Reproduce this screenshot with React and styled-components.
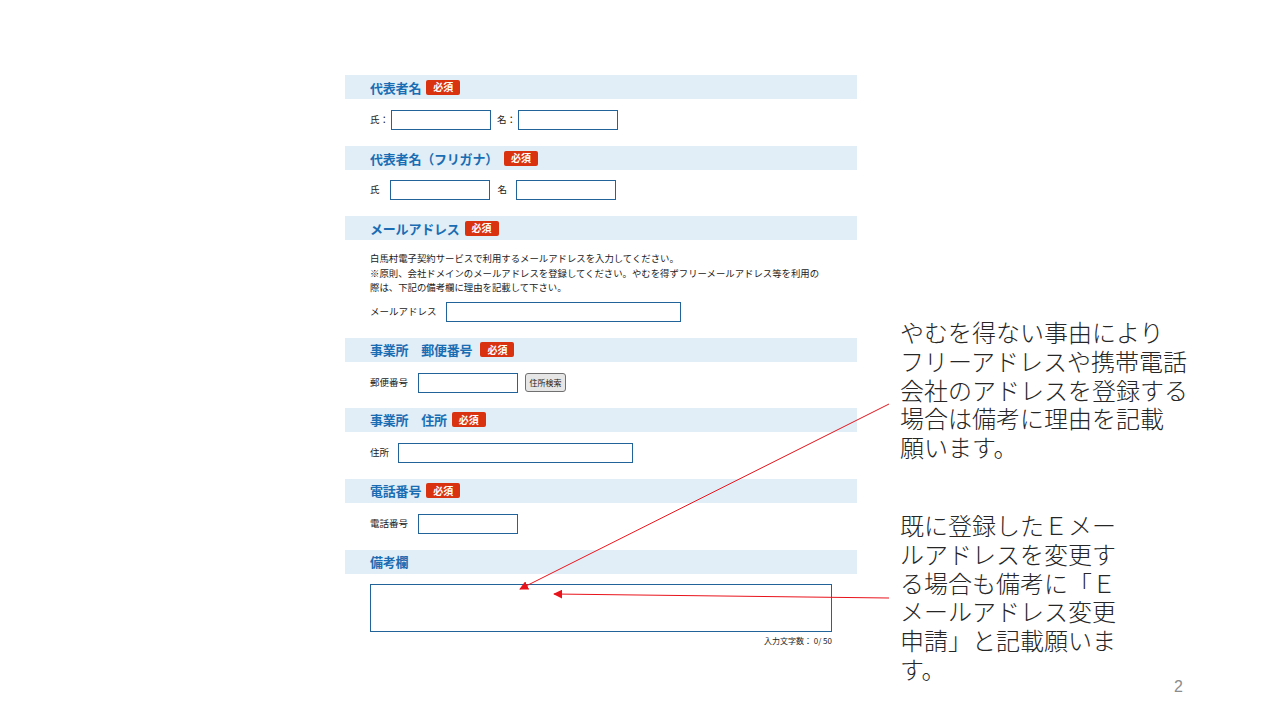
import React from 'react';
import styled, { createGlobalStyle } from 'styled-components';

const GlobalStyle = createGlobalStyle`
  html, body {
    margin: 0;
    padding: 0;
    background: #ffffff;
  }
  body {
    font-family: "Noto Sans CJK JP", "Noto Sans", sans-serif;
  }
`;

const Slide = styled.div`
  position: relative;
  width: 1280px;
  height: 720px;
  overflow: hidden;
  display: flex;
  align-items: flex-start;
  padding: 75px 0 0 345px;
  box-sizing: border-box;
`;

const Form = styled.div`
  width: 512px;
  display: flex;
  flex-direction: column;
`;

const Section = styled.div`
  display: flex;
  flex-direction: column;
  padding-bottom: ${({ bottom }) => (bottom === undefined ? 16 : bottom)}px;
`;

const Header = styled.div`
  height: 24px;
  background: #e1eef8;
  display: flex;
  align-items: center;
  gap: ${({ gap }) => gap || 5}px;
  padding-left: 25px;
`;

const Title = styled.span`
  font-size: 13px;
  font-weight: 700;
  color: #1a6db2;
  line-height: 1;
  letter-spacing: -0.2px;
`;

const Required = styled.span`
  display: inline-flex;
  align-items: center;
  justify-content: center;
  width: 34px;
  height: 15px;
  background: #d93210;
  border-radius: 2px;
  color: #ffffff;
  font-size: 10px;
  font-weight: 700;
  line-height: 1;
`;

const Body = styled.div`
  padding: ${({ top }) => top || 11}px 25px 0 25px;
  display: flex;
  flex-direction: column;
`;

const Row = styled.div`
  display: flex;
  align-items: center;
  height: 20px;
`;

const Label = styled.span`
  font-size: 9.5px;
  color: #222222;
  line-height: 1;
  margin-right: ${({ gap }) => gap || 2}px;
  white-space: nowrap;
`;

const Input = styled.div`
  width: ${({ w }) => w || 100}px;
  height: 20px;
  box-sizing: border-box;
  border: 1px solid #22649a;
  background: #ffffff;
  margin-right: ${({ gap }) => gap || 0}px;
`;

const SearchButton = styled.div`
  width: 41px;
  height: 19px;
  box-sizing: border-box;
  border: 1px solid #707070;
  border-radius: 3px;
  background: #e6e6e6;
  display: flex;
  align-items: center;
  justify-content: center;
  font-size: 8px;
  color: #222222;
`;

const Description = styled.p`
  margin: 0 0 7px 0;
  font-size: 9.4px;
  line-height: 14.5px;
  color: #222222;
`;

const TextArea = styled.div`
  width: 462px;
  height: 48px;
  box-sizing: border-box;
  border: 1px solid #22649a;
  background: #ffffff;
`;

const Counter = styled.div`
  width: 462px;
  text-align: right;
  font-size: 8px;
  color: #222222;
  margin-top: 3px;
  line-height: 12px;
`;

const Notes = styled.div`
  margin-left: 43px;
  padding-top: 243px;
  display: flex;
  flex-direction: column;
  gap: 49px;
`;

const Note = styled.p`
  margin: 0;
  font-size: 24px;
  line-height: 28.8px;
  color: #262626;
  font-weight: 300;
  white-space: nowrap;
`;

const PageNumber = styled.div`
  position: absolute;
  right: 97px;
  bottom: 24px;
  font-family: "Liberation Sans", "Noto Sans", sans-serif;
  font-size: 16px;
  color: #8c8c8c;
`;

const ArrowLayer = styled.svg`
  position: absolute;
  left: 0;
  top: 0;
  width: 1280px;
  height: 720px;
  pointer-events: none;
`;

function Arrows() {
  return (
    <ArrowLayer viewBox="0 0 1280 720">
      <defs>
        <marker id="head" viewBox="0 0 10 10" refX="9" refY="5" markerWidth="9" markerHeight="9" orient="auto-start-reverse">
          <path d="M0 0 L10 5 L0 10 z" fill="#e8131b" />
        </marker>
      </defs>
      <line x1="889" y1="404" x2="520" y2="589" stroke="#e8131b" strokeWidth="1" markerEnd="url(#head)" />
      <line x1="889" y1="598" x2="554" y2="594" stroke="#e8131b" strokeWidth="1" markerEnd="url(#head)" />
    </ArrowLayer>
  );
}

export default function App() {
  return (
    <>
      <GlobalStyle />
      <Slide>
        <Form>
          <Section>
            <Header>
              <Title>代表者名</Title>
              <Required>必須</Required>
            </Header>
            <Body>
              <Row>
                <Label>氏：</Label>
                <Input gap={6} />
                <Label>名：</Label>
                <Input />
              </Row>
            </Body>
          </Section>

          <Section>
            <Header gap={6}>
              <Title>代表者名（フリガナ）</Title>
              <Required>必須</Required>
            </Header>
            <Body top={10}>
              <Row>
                <Label gap={10}>氏</Label>
                <Input gap={8} />
                <Label gap={9}>名</Label>
                <Input />
              </Row>
            </Body>
          </Section>

          <Section>
            <Header>
              <Title>メールアドレス</Title>
              <Required>必須</Required>
            </Header>
            <Body top={11}>
              <Description>
                白馬村電子契約サービスで利用するメールアドレスを入力してください。
                <br />
                ※原則、会社ドメインのメールアドレスを登録してください。やむを得ずフリーメールアドレス等を利用の
                <br />
                際は、下記の備考欄に理由を記載して下さい。
              </Description>
              <Row>
                <Label gap={9}>メールアドレス</Label>
                <Input w={235} />
              </Row>
            </Body>
          </Section>

          <Section bottom={15}>
            <Header gap={8}>
              <Title>事業所　郵便番号</Title>
              <Required>必須</Required>
            </Header>
            <Body>
              <Row>
                <Label gap={10}>郵便番号</Label>
                <Input gap={7} />
                <SearchButton>住所検索</SearchButton>
              </Row>
            </Body>
          </Section>

          <Section>
            <Header>
              <Title>事業所　住所</Title>
              <Required>必須</Required>
            </Header>
            <Body>
              <Row>
                <Label gap={9}>住所</Label>
                <Input w={235} />
              </Row>
            </Body>
          </Section>

          <Section>
            <Header>
              <Title>電話番号</Title>
              <Required>必須</Required>
            </Header>
            <Body>
              <Row>
                <Label gap={10}>電話番号</Label>
                <Input />
              </Row>
            </Body>
          </Section>

          <Section bottom={0}>
            <Header>
              <Title>備考欄</Title>
            </Header>
            <Body top={10}>
              <TextArea />
              <Counter>入力文字数： 0/ 50</Counter>
            </Body>
          </Section>
        </Form>

        <Notes>
          <Note>
            やむを得ない事由により
            <br />
            フリーアドレスや携帯電話
            <br />
            会社のアドレスを登録する
            <br />
            場合は備考に理由を記載
            <br />
            願います。
          </Note>
          <Note>
            既に登録したＥメー
            <br />
            ルアドレスを変更す
            <br />
            る場合も備考に「Ｅ
            <br />
            メールアドレス変更
            <br />
            申請」と記載願いま
            <br />
            す。
          </Note>
        </Notes>

        <Arrows />
        <PageNumber>2</PageNumber>
      </Slide>
    </>
  );
}
